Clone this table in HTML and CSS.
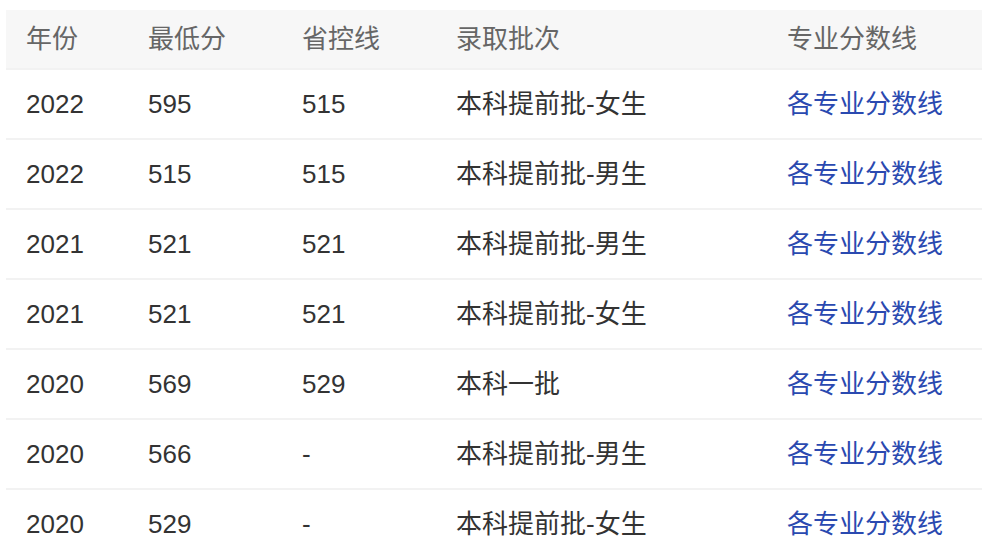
FILE: index.html
```html
<!DOCTYPE html>
<html lang="zh">
<head>
<meta charset="utf-8">
<link rel="stylesheet" href="styles.css">
</head>
<body>
<div class="wrap">
  <div class="table">
    <div class="row head">
      <div class="cell">年份</div>
      <div class="cell">最低分</div>
      <div class="cell">省控线</div>
      <div class="cell">录取批次</div>
      <div class="cell">专业分数线</div>
    </div>
    <div class="row">
      <div class="cell">2022</div><div class="cell">595</div><div class="cell">515</div><div class="cell">本科提前批-女生</div><div class="cell"><a class="link" href="#">各专业分数线</a></div>
    </div>
    <div class="row">
      <div class="cell">2022</div><div class="cell">515</div><div class="cell">515</div><div class="cell">本科提前批-男生</div><div class="cell"><a class="link" href="#">各专业分数线</a></div>
    </div>
    <div class="row">
      <div class="cell">2021</div><div class="cell">521</div><div class="cell">521</div><div class="cell">本科提前批-男生</div><div class="cell"><a class="link" href="#">各专业分数线</a></div>
    </div>
    <div class="row">
      <div class="cell">2021</div><div class="cell">521</div><div class="cell">521</div><div class="cell">本科提前批-女生</div><div class="cell"><a class="link" href="#">各专业分数线</a></div>
    </div>
    <div class="row">
      <div class="cell">2020</div><div class="cell">569</div><div class="cell">529</div><div class="cell">本科一批</div><div class="cell"><a class="link" href="#">各专业分数线</a></div>
    </div>
    <div class="row">
      <div class="cell">2020</div><div class="cell">566</div><div class="cell">-</div><div class="cell">本科提前批-男生</div><div class="cell"><a class="link" href="#">各专业分数线</a></div>
    </div>
    <div class="row">
      <div class="cell">2020</div><div class="cell">529</div><div class="cell">-</div><div class="cell">本科提前批-女生</div><div class="cell"><a class="link" href="#">各专业分数线</a></div>
    </div>
  </div>
</div>
</body>
</html>
```
FILE: styles.css
```css
html, body {
  margin: 0;
  padding: 0;
  background: #ffffff;
}
body {
  font-family: "Liberation Sans", "Noto Sans CJK SC", sans-serif;
  font-size: 26px;
  color: #333333;
}
.wrap {
  padding: 10px 0 0 6px;
}
.table {
  display: flex;
  flex-direction: column;
}
.row {
  display: grid;
  grid-template-columns: 122px 154px 154px 331px 1fr;
  height: 68px;
  align-items: center;
  border-bottom: 2px solid #f2f2f2;
}
.row.head {
  height: 58px;
  background: #f7f7f7;
  color: #666666;
}
.cell {
  padding-left: 20px;
  white-space: nowrap;
  line-height: 30px;
}
.link {
  color: #2a49b0;
  text-decoration: none;
}
```
